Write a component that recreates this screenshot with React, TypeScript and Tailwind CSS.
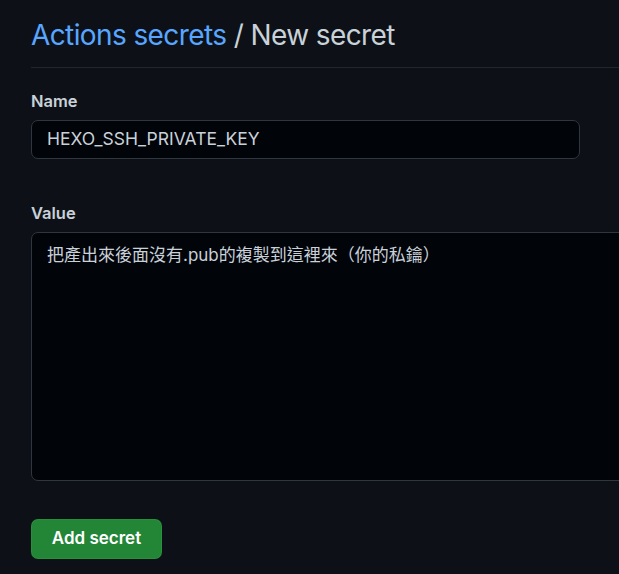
export default function App() {
  return (
    <div
      className="w-[619px] h-[574px] overflow-hidden bg-[#0d1117] text-[#c9d1d9]"
      style={{ fontFamily: 'Inter, "Noto Sans CJK TC", sans-serif' }}
    >
      <div className="pl-[31px] pt-[17px]">
        <div className="border-b border-[#21262d] pb-[14px]">
          <h2 className="text-[28px] leading-[36px] font-normal tracking-[-0.6px]">
            <a className="text-[#58a6ff]">Actions secrets</a>
            <span className="text-[#c9d1d9]"> / New secret</span>
          </h2>
        </div>

        <form className="pt-[22px]">
          <label className="block text-[16.5px] leading-[22px] font-semibold text-[#c9d1d9]">Name</label>
          <div className="mt-[8px] w-[549px] h-[39px] rounded-[7px] border border-[#30363d] bg-[#010409] flex items-center px-[15px] text-[17.5px] text-[#c9d1d9]">
            HEXO_SSH_PRIVATE_KEY
          </div>

          <label className="block mt-[43px] text-[16.5px] leading-[22px] font-semibold text-[#c9d1d9]">Value</label>
          <div className="mt-[8px] w-[640px] h-[249px] rounded-[7px] border border-[#30363d] bg-[#010409] px-[15px] pt-[10px] text-[17px] leading-[24px] text-[#c9d1d9]">
            把產出來後面沒有.pub的複製到這裡來（你的私鑰）
          </div>

          <button
            type="button"
            className="mt-[38px] w-[131px] h-[40px] rounded-[7px] bg-[#238636] border border-[#2ea043]/40 text-white text-[17px] font-semibold"
          >
            Add secret
          </button>
        </form>
      </div>
    </div>
  );
}
